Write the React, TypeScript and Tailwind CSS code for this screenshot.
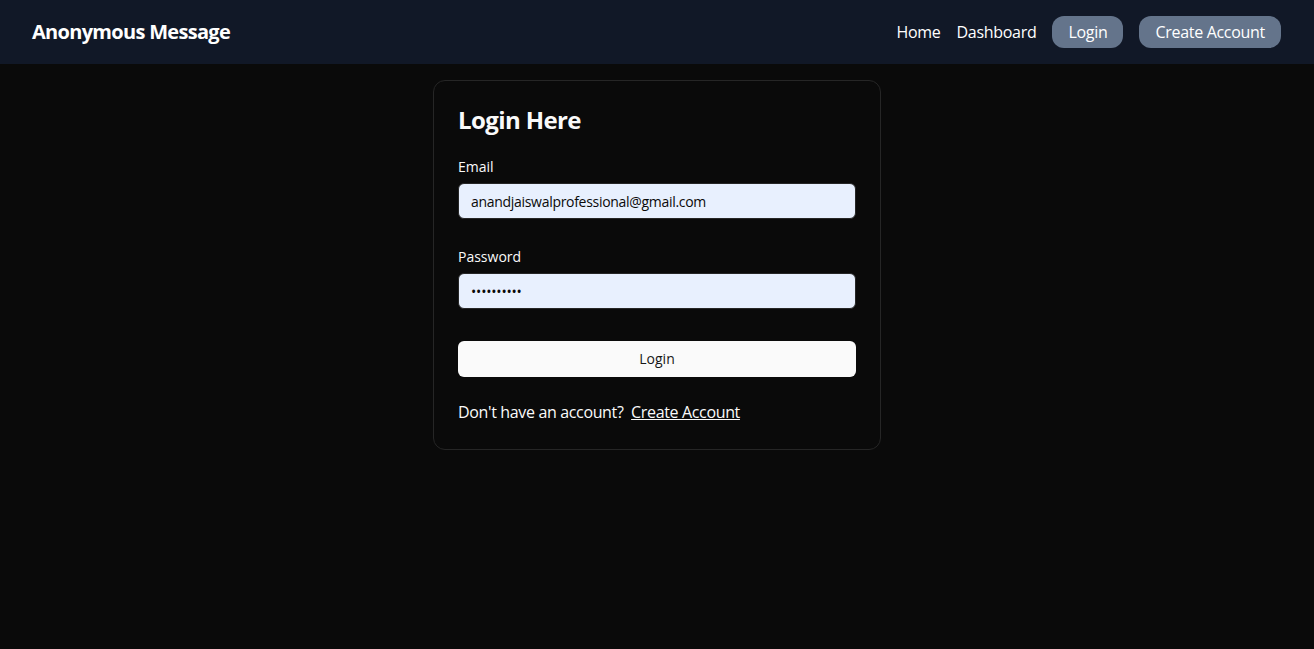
import React, { useState } from 'react'

export default function App() {
    const [email, setEmail] = useState("anandjaiswalprofessional@gmail.com");
    const [password, setPassword] = useState("••••••••••");

    return (
        <div className="min-h-screen bg-[#0a0a0a] text-[#fafafa]" style={{ fontFamily: '"Open Sans", "Noto Sans", sans-serif' }}>
            <nav className="h-16 bg-[#111827] pl-8 pr-[33px] flex items-center justify-between">
                <h1 className="text-xl font-bold text-white tracking-[-0.7px] -mt-px">Anonymous Message</h1>
                <div className="flex items-center gap-4 text-base text-white -mt-px">
                    <a className="cursor-pointer tracking-[-0.3px]">Home</a>
                    <a className="cursor-pointer tracking-[-0.3px]">Dashboard</a>
                    <button className="h-8 px-4 rounded-xl bg-[#64748b] tracking-[-0.3px]">Login</button>
                    <button className="h-8 px-4 rounded-xl bg-[#64748b] tracking-[-0.3px]">Create Account</button>
                </div>
            </nav>
            <main className="flex justify-center pt-4">
                <div className="w-[448px] rounded-xl border border-[#262626] bg-[#0a0a0a] px-6 pt-6 pb-[25px]">
                    <h2 className="text-2xl font-bold leading-8 tracking-[-0.6px] -mt-px">Login Here</h2>
                    <form className="mt-6 flex flex-col" onSubmit={(e) => e.preventDefault()}>
                        <label className="text-sm font-medium leading-none">Email</label>
                        <input
                            value={email}
                            onChange={(e) => setEmail(e.target.value)}
                            className="mt-[9px] h-9 w-full rounded-md border border-[#262626] bg-[#e8f0fe] px-3 text-sm text-[#0a0a0a] outline-none tracking-[-0.3px]"
                        />
                        <label className="mt-[31px] text-sm font-medium leading-none">Password</label>
                        <input
                            value={password}
                            onChange={(e) => setPassword(e.target.value)}
                            className="mt-[9px] h-9 w-full rounded-md border border-[#262626] bg-[#e8f0fe] px-3 text-sm text-[#0a0a0a] outline-none tracking-[-0.2px]"
                        />
                        <button type="submit" className="mt-8 h-9 w-full rounded-md bg-[#fafafa] text-sm font-medium text-[#171717]">
                            Login
                        </button>
                    </form>
                    <p className="mt-[23px] text-base leading-6 tracking-[-0.35px]">
                        Don't have an account?&nbsp; <a className="underline cursor-pointer">Create Account</a>
                    </p>
                </div>
            </main>
        </div>
    );
}
